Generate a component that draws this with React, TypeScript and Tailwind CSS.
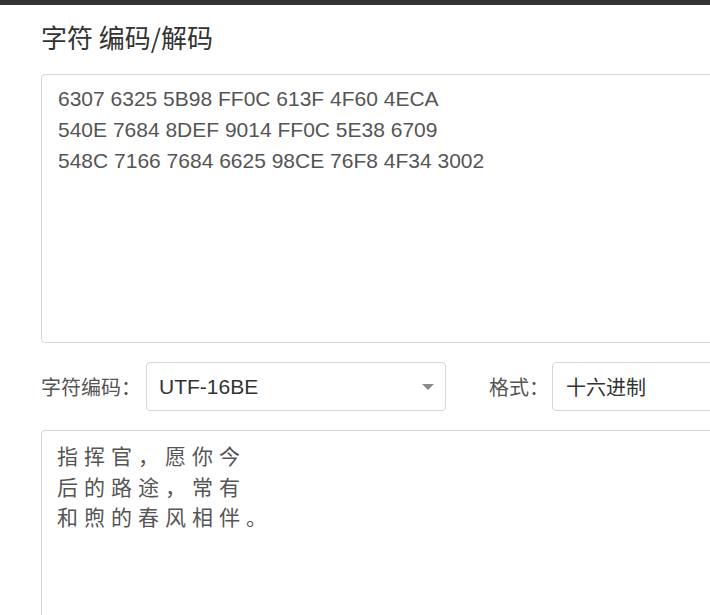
const latin = "font-['Liberation_Sans','Noto_Sans_CJK_SC',sans-serif]"
const cjk = "font-['Noto_Sans_CJK_SC','Liberation_Sans',sans-serif]"

const hexText = `6307 6325 5B98 FF0C 613F 4F60 4ECA
540E 7684 8DEF 9014 FF0C 5E38 6709
548C 7166 7684 6625 98CE 76F8 4F34 3002`

const plainText = `指挥官，愿你今
后的路途，常有
和煦的春风相伴。`

function Caret() {
  return (
    <svg width="12" height="6" viewBox="0 0 12 6" aria-hidden>
      <path d="M0 0h12L6 6z" fill="#8a8a8a" />
    </svg>
  )
}

export default function App() {
  return (
    <div className={`h-[615px] w-[710px] overflow-hidden bg-white ${latin}`}>
      <div className="h-[5px] bg-[#333333]" />
      <div className="pl-[41px]">
        <h1 className={`mt-[19px] text-[26px] leading-[26px] text-[#333] ${cjk}`}>字符 编码/解码</h1>

        {/* 十六进制输入 */}
        <textarea
          readOnly
          defaultValue={hexText}
          className="mt-[24px] block h-[269px] w-[700px] resize-none rounded-[4px] border border-[#d6d6d6] px-[16px] pt-[8px] text-[21px] leading-[31px] text-[#555] outline-none"
        />

        <div className="mt-[19px] flex h-[49px] w-[700px] items-center">
          <label className={`w-[105px] shrink-0 whitespace-nowrap text-[20px] text-[#555] ${cjk}`}>字符编码：</label>
          <div className="flex h-full w-[300px] shrink-0 items-center justify-between rounded-[4px] border border-[#d6d6d6] pl-[12px] pr-[11px]">
            <span className="text-[21px] text-[#333]">UTF-16BE</span>
            <Caret />
          </div>
          <label className={`ml-[43px] w-[63px] shrink-0 whitespace-nowrap text-[20px] text-[#555] ${cjk}`}>格式：</label>
          <div className={`flex h-full w-[200px] shrink-0 items-center rounded-[4px] border border-[#d6d6d6] pl-[13px] text-[20px] text-[#333] ${cjk}`}>
            十六进制
          </div>
        </div>

        {/* 文本 */}
        <textarea
          readOnly
          defaultValue={plainText}
          className={`mt-[19px] block h-[220px] w-[700px] resize-none rounded-[4px] border border-[#d6d6d6] px-[15px] pt-[9px] text-[21px] leading-[30.5px] tracking-[6px] text-[#555] outline-none ${cjk}`}
        />
      </div>
    </div>
  )
}
